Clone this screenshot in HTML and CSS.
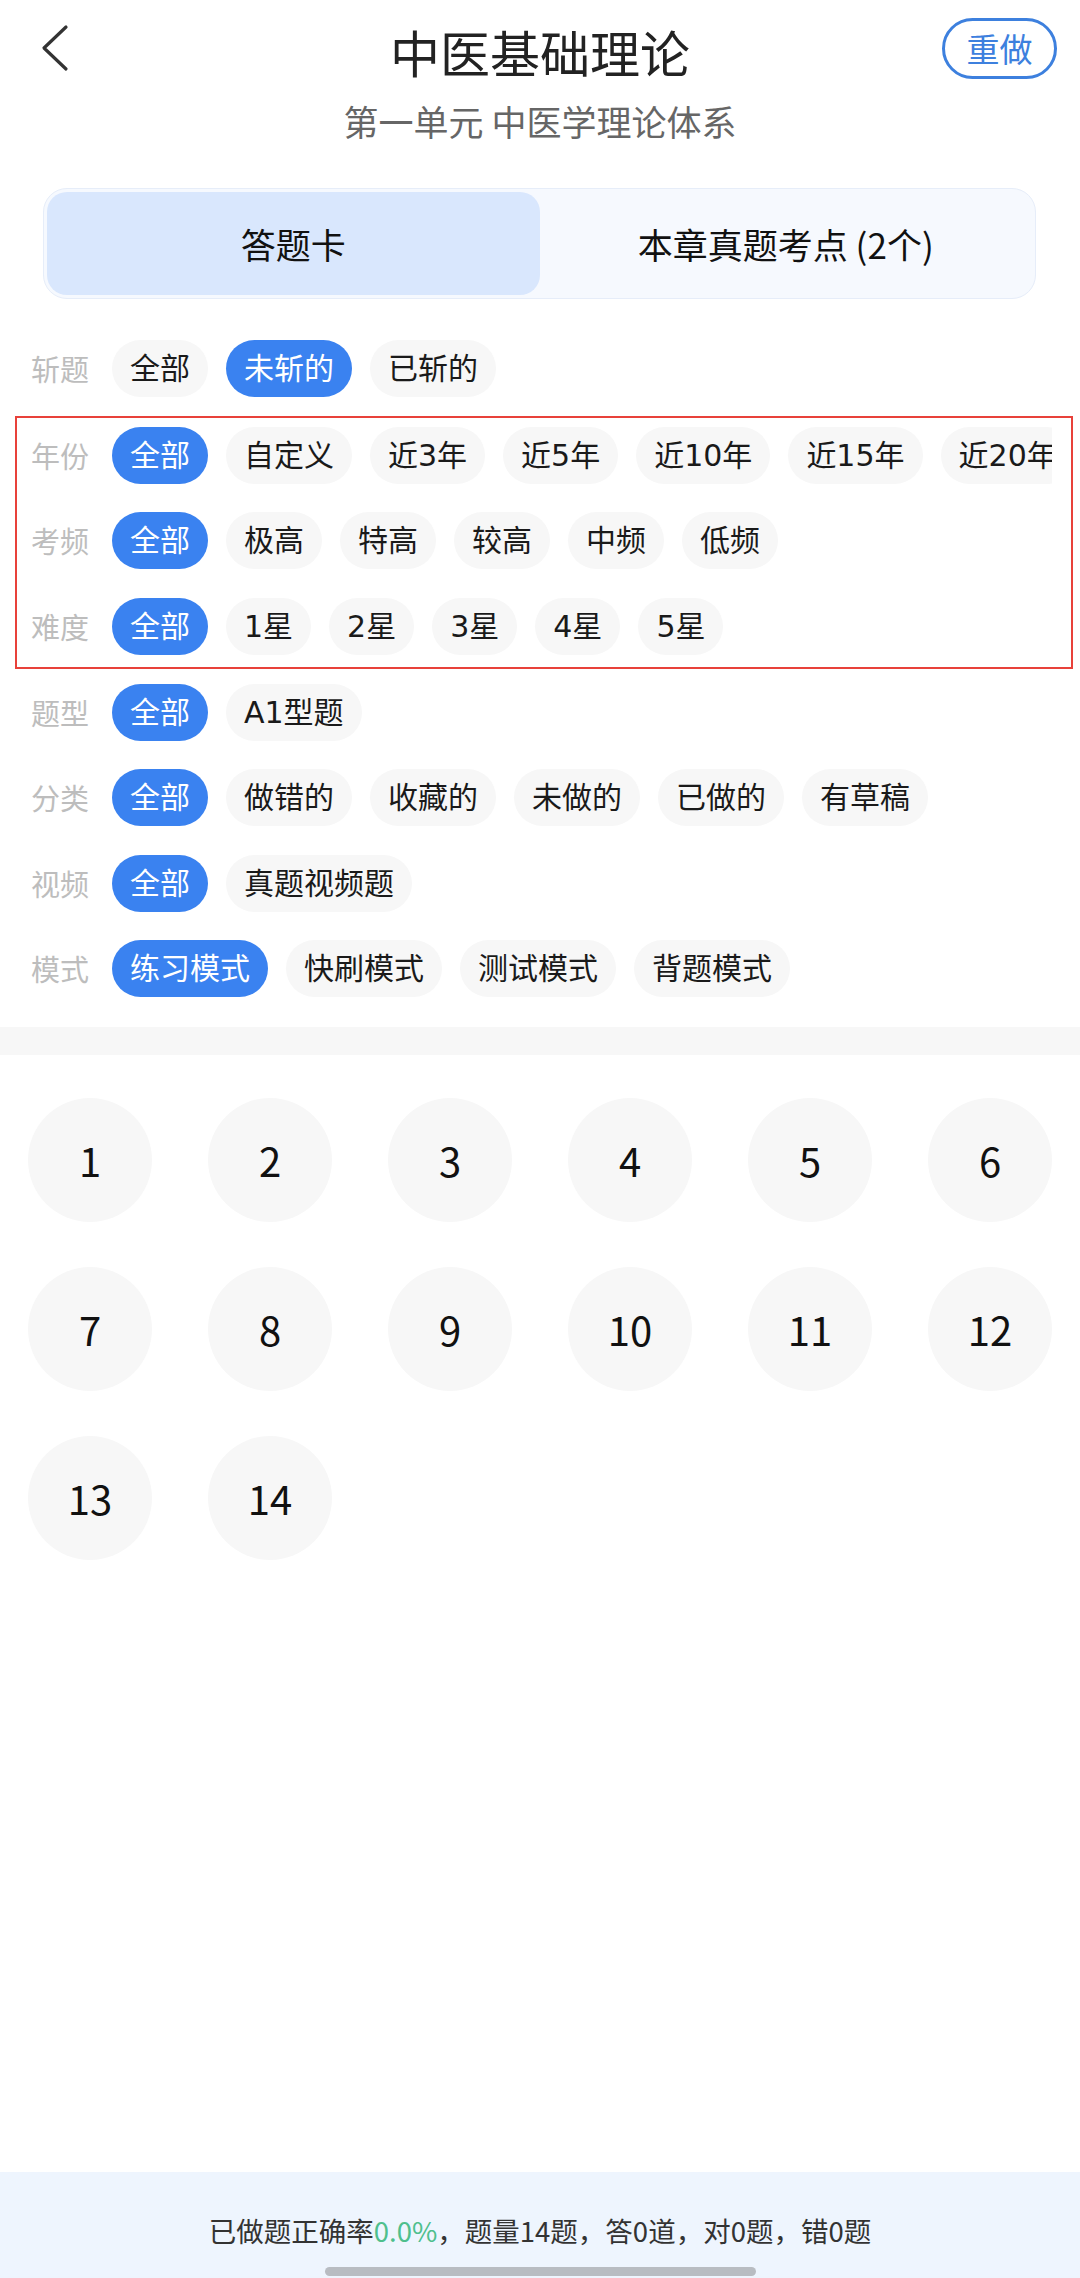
FILE: index.html
```html
<!DOCTYPE html>
<html lang="zh-CN">
<head>
<meta charset="utf-8">
<title>中医基础理论</title>
<link rel="stylesheet" href="styles.css">
</head>
<body>
<div class="page">
  <header class="header">
    <div class="header-left">
      <svg class="back" width="30" height="48" viewBox="0 0 30 48"><polyline points="26,3 4,24 26,45" fill="none" stroke="#333" stroke-width="3.2" stroke-linecap="round" stroke-linejoin="round"/></svg>
    </div>
    <h1 class="title">中医基础理论</h1>
    <div class="header-right"><span class="redo">重做</span></div>
  </header>
  <div class="subtitle">第一单元 中医学理论体系</div>

  <div class="tabs">
    <div class="tab active">答题卡</div>
    <div class="tab">本章真题考点 (2个)</div>
  </div>

  <section class="filters">
    <div class="row">
      <span class="label">斩题</span>
      <div class="chips"><span class="chip">全部</span><span class="chip on">未斩的</span><span class="chip">已斩的</span></div>
    </div>
    <div class="highlight">
      <div class="row">
        <span class="label">年份</span>
        <div class="chips"><span class="chip on">全部</span><span class="chip">自定义</span><span class="chip">近3年</span><span class="chip">近5年</span><span class="chip">近10年</span><span class="chip">近15年</span><span class="chip">近20年</span></div>
      </div>
      <div class="row">
        <span class="label">考频</span>
        <div class="chips"><span class="chip on">全部</span><span class="chip">极高</span><span class="chip">特高</span><span class="chip">较高</span><span class="chip">中频</span><span class="chip">低频</span></div>
      </div>
      <div class="row">
        <span class="label">难度</span>
        <div class="chips"><span class="chip on">全部</span><span class="chip">1星</span><span class="chip">2星</span><span class="chip">3星</span><span class="chip">4星</span><span class="chip">5星</span></div>
      </div>
    </div>
    <div class="row">
      <span class="label">题型</span>
      <div class="chips"><span class="chip on">全部</span><span class="chip">A1型题</span></div>
    </div>
    <div class="row">
      <span class="label">分类</span>
      <div class="chips"><span class="chip on">全部</span><span class="chip">做错的</span><span class="chip">收藏的</span><span class="chip">未做的</span><span class="chip">已做的</span><span class="chip">有草稿</span></div>
    </div>
    <div class="row">
      <span class="label">视频</span>
      <div class="chips"><span class="chip on">全部</span><span class="chip">真题视频题</span></div>
    </div>
    <div class="row">
      <span class="label">模式</span>
      <div class="chips"><span class="chip on">练习模式</span><span class="chip">快刷模式</span><span class="chip">测试模式</span><span class="chip">背题模式</span></div>
    </div>
  </section>

  <div class="band"></div>

  <section class="grid">
    <span class="num">1</span><span class="num">2</span><span class="num">3</span><span class="num">4</span><span class="num">5</span><span class="num">6</span>
    <span class="num">7</span><span class="num">8</span><span class="num">9</span><span class="num">10</span><span class="num">11</span><span class="num">12</span>
    <span class="num">13</span><span class="num">14</span>
  </section>

  <footer class="footer">
    <div class="stats">已做题正确率<span class="green">0.0%</span>，题量14题，答0道，对0题，错0题</div>
    <div class="home-bar"></div>
  </footer>
</div>
</body>
</html>
```

FILE: styles.css
```css
* { box-sizing: border-box; }
html, body { margin: 0; padding: 0; background: #fff; }
body {
  font-family: "Noto Sans CJK SC", "Noto Sans", sans-serif;
  color: #1a1a1a;
}
.page {
  width: 1080px;
  min-height: 100vh;
  display: flex;
  flex-direction: column;
}
.header {
  height: 96px;
  display: grid;
  grid-template-columns: 1fr auto 1fr;
  align-items: center;
}
.header-left { padding-left: 40px; display: flex; align-items: center; }
.back { display: block; }
.title {
  margin: 0;
  font-size: 50px;
  font-weight: 400;
  color: #222;
  line-height: 60px;
  padding-top: 6px;
}
.header-right { display: flex; justify-content: flex-end; padding-right: 23px; }
.redo {
  width: 115px;
  height: 61px;
  border: 3px solid #3d80de;
  border-radius: 31px;
  color: #3d80de;
  font-size: 33px;
  display: flex;
  align-items: center;
  justify-content: center;
  line-height: 1;
}
.subtitle {
  text-align: center;
  font-size: 35px;
  line-height: 50px;
  color: #666;
}
.tabs {
  margin: 42px 44px 0 43px;
  height: 111px;
  border: 1.5px solid #e6edf9;
  background: #f6f9fe;
  border-radius: 24px;
  padding: 3px;
  display: grid;
  grid-template-columns: 1fr 1fr;
}
.tab {
  display: flex;
  align-items: center;
  justify-content: center;
  font-size: 35px;
  color: #111;
  border-radius: 20px;
}
.tab.active { background: #d9e7fd; }

.filters {
  margin-top: 41px;
  padding: 0 28px 0 31px;
  display: flex;
  flex-direction: column;
  gap: 28.5px;
}
.highlight {
  margin: -10px -21px -13.5px -16px;
  border: 2px solid #e8413a;
  padding: 9px 19px 12px 14px;
  display: flex;
  flex-direction: column;
  gap: 28.5px;
}
.row {
  display: flex;
  align-items: center;
  height: 57px;
}
.label {
  flex: none;
  width: 81px;
  font-size: 29px;
  color: #bdbdbd;
  line-height: 57px;
}
.chips {
  flex: 1;
  min-width: 0;
  display: flex;
  gap: 18px;
  overflow: hidden;
}
.chip {
  flex: none;
  height: 57px;
  line-height: 57px;
  padding: 0 18px;
  border-radius: 29px;
  background: #f7f7f7;
  font-family: "DejaVu Sans", "Noto Sans CJK SC", sans-serif;
  font-size: 30px;
  color: #1a1a1a;
  white-space: nowrap;
}
.chip.on { background: #3a82f0; color: #fff; }

.band {
  margin-top: 30px;
  height: 28px;
  background: #f7f7f7;
}
.grid {
  padding-top: 43px;
  display: grid;
  grid-template-columns: repeat(6, 180px);
  row-gap: 45px;
}
.num {
  justify-self: center;
  width: 124px;
  height: 124px;
  border-radius: 50%;
  background: #f7f7f7;
  display: flex;
  align-items: center;
  justify-content: center;
  font-size: 40px;
  color: #111;
}
.footer {
  margin-top: auto;
  height: 106px;
  background: #eef5fe;
  display: flex;
  flex-direction: column;
  align-items: center;
  padding-top: 40px;
}
.stats {
  font-size: 27.5px;
  line-height: 36px;
  color: #333;
}
.green { color: #4fbf8d; }
.home-bar {
  margin-top: 19px;
  width: 431px;
  height: 9px;
  border-radius: 5px;
  background: #b8bcc2;
}
```
